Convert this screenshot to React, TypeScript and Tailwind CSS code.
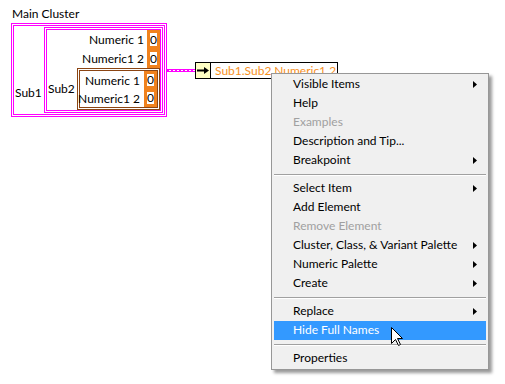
import React from "react";

function Num() {
  return (
    <div className="w-[13px] h-[19px] shrink-0 border-[3px] border-[#f0821e] bg-white flex items-center justify-center text-[12px] leading-none text-black">
      0
    </div>
  );
}

function NumS() {
  return (
    <div className="w-[13px] h-[18px] shrink-0 border-[3px] border-[#f0821e] bg-white flex items-center justify-center text-[12px] leading-none text-black">
      0
    </div>
  );
}

function Arrow() {
  return (
    <svg width="4" height="7" viewBox="0 0 4 7" className="block">
      <polygon points="0,0 4,3.5 0,7" fill="#000" />
    </svg>
  );
}

type Item = { label: string; sub?: boolean; disabled?: boolean; active?: boolean } | "sep";

const items: Item[] = [
  { label: "Visible Items", sub: true },
  { label: "Help" },
  { label: "Examples", disabled: true },
  { label: "Description and Tip..." },
  { label: "Breakpoint", sub: true },
  "sep",
  { label: "Select Item", sub: true },
  { label: "Add Element" },
  { label: "Remove Element", disabled: true },
  { label: "Cluster, Class, & Variant Palette", sub: true },
  { label: "Numeric Palette", sub: true },
  { label: "Create", sub: true },
  "sep",
  { label: "Replace", sub: true },
  { label: "Hide Full Names", active: true },
  "sep",
  { label: "Properties" },
];

export default function App() {
  return (
    <div className="relative w-[505px] h-[384px] bg-white overflow-hidden font-['Lato',sans-serif] text-[12px] text-black">
      {/* Cluster */}
      <div className="absolute left-[11px] top-[6px] flex flex-col">
        <div className="leading-[15px] pl-[1px] mb-[2px] whitespace-nowrap">Main Cluster</div>
        <div className="flex w-[156px] border-[3px] border-double border-[#ff00ff] p-[1px]">
          <div className="w-[29px] shrink-0 pt-[58px] leading-[15px]">Sub1</div>
          <div className="flex w-[119px] shrink-0 border-[3px] border-double border-[#ff00ff]">
            <div className="w-[30px] shrink-0 pt-[51px] pl-[1px] leading-[15px]">Sub2</div>
            <div className="flex flex-col w-[83px] shrink-0">
              <div className="flex items-center justify-end whitespace-nowrap">
                <span className="mr-[3px] leading-[15px]">Numeric 1</span>
                <Num />
              </div>
              <div className="flex items-center justify-end whitespace-nowrap">
                <span className="mr-[3px] leading-[15px]">Numeric1 2</span>
                <Num />
              </div>
              <div className="border-[3px] border-double border-[#8b4513] flex flex-col">
                <div className="flex items-center justify-end whitespace-nowrap">
                  <span className="mr-[4px] leading-[15px]">Numeric 1</span>
                  <NumS />
                </div>
                <div className="flex items-center justify-end whitespace-nowrap">
                  <span className="mr-[4px] leading-[15px]">Numeric1 2</span>
                  <NumS />
                </div>
              </div>
            </div>
          </div>
        </div>
      </div>

      {/* Wire */}
      <svg className="absolute left-[167px] top-[69px]" width="28" height="3" viewBox="0 0 28 3">
        <rect x="0" y="0" width="28" height="1" fill="#ff00ff" />
        <rect x="0" y="2" width="28" height="1" fill="#ff00ff" />
        <line x1="0" y1="1.5" x2="28" y2="1.5" stroke="#ff00ff" strokeWidth="1" strokeDasharray="2 2" />
      </svg>

      {/* Unbundle by name node */}
      <div className="absolute left-[195px] top-[62px] flex h-[17px] border border-black bg-white">
        <div className="w-[15px] h-full bg-[#ffffc4] border-r border-black flex items-center justify-center">
          <svg width="12" height="7" viewBox="0 0 12 7">
            <rect x="0" y="2.5" width="8" height="2" fill="#000" />
            <polygon points="7,0 12,3.5 7,7" fill="#000" />
          </svg>
        </div>
        <div className="w-[126px] pl-[4px] leading-[15px] whitespace-nowrap text-[#f7901e]">Sub1.Sub2.Numeric1 2</div>
      </div>

      {/* Context menu */}
      <div className="absolute left-[271px] top-[73px] w-[218px] bg-[#f0f0f0] border border-[#979797] py-[1px] shadow-[3px_3px_3px_rgba(0,0,0,0.4)]">
        {items.map((it, i) =>
          it === "sep" ? (
            <div key={i} className="h-[9px] pt-[4px] mx-[2px]">
              <div className="h-[1px] bg-[#a0a0a0]" />
              <div className="h-[1px] bg-white" />
            </div>
          ) : (
            <div
              key={i}
              className={
                it.active
                  ? "h-[19px] mx-[2px] pl-[19px] pr-[9px] flex items-center justify-between bg-[#3399ff] text-white"
                  : it.disabled
                  ? "h-[19px] mx-[2px] pl-[19px] pr-[9px] flex items-center justify-between text-[#a0a0a0]"
                  : "h-[19px] mx-[2px] pl-[19px] pr-[9px] flex items-center justify-between text-black"
              }
            >
              <span className="leading-[17px] pb-[2px] whitespace-nowrap">{it.label}</span>
              {it.sub ? <Arrow /> : null}
            </div>
          )
        )}
      </div>

      {/* Cursor */}
      <svg className="absolute left-[391px] top-[327px]" width="13" height="20" viewBox="0 0 13 20">
        <path
          d="M0.5 0.5 L0.5 16.5 L4.5 12.5 L7.5 18.5 L9.5 17.5 L6.5 11.5 L11.5 11.5 Z"
          fill="#fff"
          stroke="#000"
          strokeWidth="1"
          strokeLinejoin="miter"
        />
      </svg>
    </div>
  );
}
